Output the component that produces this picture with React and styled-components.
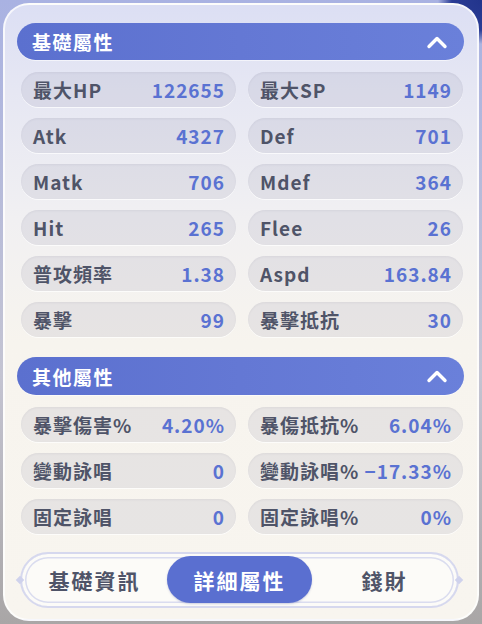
import React from "react";
import styled, { createGlobalStyle } from "styled-components";

const GlobalStyle = createGlobalStyle`
  html, body {
    margin: 0;
    padding: 0;
  }
  body {
    width: 482px;
    height: 624px;
    overflow: hidden;
    background:
      radial-gradient(circle at 100% 0%, #22348c 0, #2a3c95 30px, transparent 44px),
      linear-gradient(180deg, #a9b2e2 0%, #c4c4d2 60%, #a9a6a6 100%);
    font-family: "Noto Sans CJK TC", "Noto Sans", sans-serif;
  }
`;

const Panel = styled.div`
  box-sizing: border-box;
  margin: 3px;
  height: 618px;
  border-radius: 26px;
  border: 2px solid rgba(255, 255, 255, 0.75);
  background: linear-gradient(
    180deg,
    #dcdff4 0%,
    #e6e7f3 14%,
    #f1f0f2 35%,
    #f7f4ee 55%,
    #f8f5ef 100%
  );
  padding: 18px 13px 0 12px;
  display: flex;
  flex-direction: column;
`;

const Section = styled.section`
  display: flex;
  flex-direction: column;
  margin-top: ${(p) => p.$top || 0}px;
`;

const Header = styled.div`
  height: ${(p) => p.$h || 37}px;
  border-radius: 20px;
  background: linear-gradient(90deg, #5b70cf 0%, #6478d4 50%, #6a80da 100%);
  display: flex;
  align-items: center;
  justify-content: space-between;
  padding: 0 16px 0 15px;
  color: #ffffff;
  font-size: 19px;
  font-weight: 700;
  letter-spacing: 1.5px;
  box-shadow: 0 1px 0 rgba(255, 255, 255, 0.6);
`;

const Chevron = () => (
  <svg width="22" height="14" viewBox="0 0 22 14" fill="none">
    <path
      d="M3 11.5 L11 3.5 L19 11.5"
      stroke="#ffffff"
      strokeWidth="3.4"
      strokeLinecap="round"
      strokeLinejoin="round"
    />
  </svg>
);

const Grid = styled.div`
  display: grid;
  grid-template-columns: 1fr 1fr;
  column-gap: 12px;
  row-gap: 11px;
  margin-top: 12px;
  padding: 0 1px 0 4px;
`;

const Cell = styled.div`
  height: 35px;
  border-radius: 18px;
  background: rgba(118, 118, 150, 0.12);
  box-shadow: inset 0 1px 2px rgba(90, 90, 120, 0.08), 0 1px 0 rgba(255, 255, 255, 0.7);
  display: flex;
  align-items: center;
  justify-content: space-between;
  padding: 0 11px 0 12px;
  white-space: nowrap;
`;

const Label = styled.span`
  color: #4f5468;
  font-size: 19px;
  font-weight: 700;
  letter-spacing: 1px;
`;

const Value = styled.span`
  color: #5a72d2;
  font-size: 19px;
  font-weight: 700;
  letter-spacing: 1px;
`;

const TabBar = styled.div`
  position: relative;
  box-sizing: border-box;
  margin: 18px 5px 0 3px;
  height: 56px;
  border-radius: 28px;
  border: 2px solid #d6d8ee;
  background: #fcfbf8;
  box-shadow: inset 0 0 0 3px #fcfbf8, inset 0 0 0 4.5px #dadcef;
  display: grid;
  grid-template-columns: 1fr 1fr 1fr;
  align-items: stretch;
  padding: 2px 0 3px;

  &::before,
  &::after {
    content: "";
    position: absolute;
    top: 50%;
    width: 6px;
    height: 6px;
    background: #cfd2ec;
    transform: translateY(-50%) rotate(45deg);
  }
  &::before {
    left: -5px;
  }
  &::after {
    right: -5px;
  }
`;

const Tab = styled.div`
  display: flex;
  align-items: center;
  justify-content: center;
  border-radius: 26px;
  font-size: 21px;
  font-weight: 700;
  letter-spacing: 2px;
  color: ${(p) => (p.$active ? "#ffffff" : "#4f5468")};
  background: ${(p) => (p.$active ? "#5a6fd0" : "transparent")};
  box-shadow: ${(p) => (p.$active ? "0 1px 2px rgba(60, 70, 150, 0.25)" : "none")};
`;

const basic = [
  ["最大HP", "122655"],
  ["最大SP", "1149"],
  ["Atk", "4327"],
  ["Def", "701"],
  ["Matk", "706"],
  ["Mdef", "364"],
  ["Hit", "265"],
  ["Flee", "26"],
  ["普攻頻率", "1.38"],
  ["Aspd", "163.84"],
  ["暴擊", "99"],
  ["暴擊抵抗", "30"],
];

const other = [
  ["暴擊傷害%", "4.20%"],
  ["暴傷抵抗%", "6.04%"],
  ["變動詠唱", "0"],
  ["變動詠唱%", "−17.33%"],
  ["固定詠唱", "0"],
  ["固定詠唱%", "0%"],
];

const StatGrid = ({ items }) => (
  <Grid>
    {items.map(([l, v]) => (
      <Cell key={l}>
        <Label>{l}</Label>
        <Value>{v}</Value>
      </Cell>
    ))}
  </Grid>
);

export default function App() {
  return (
    <>
      <GlobalStyle />
      <Panel>
        <Section>
          <Header>
            <span>基礎屬性</span>
            <Chevron />
          </Header>
          <StatGrid items={basic} />
        </Section>
        <Section $top={20}>
          <Header $h={38}>
            <span>其他屬性</span>
            <Chevron />
          </Header>
          <StatGrid items={other} />
        </Section>
        <TabBar>
          <Tab>基礎資訊</Tab>
          <Tab $active>詳細屬性</Tab>
          <Tab>錢財</Tab>
        </TabBar>
      </Panel>
    </>
  );
}
